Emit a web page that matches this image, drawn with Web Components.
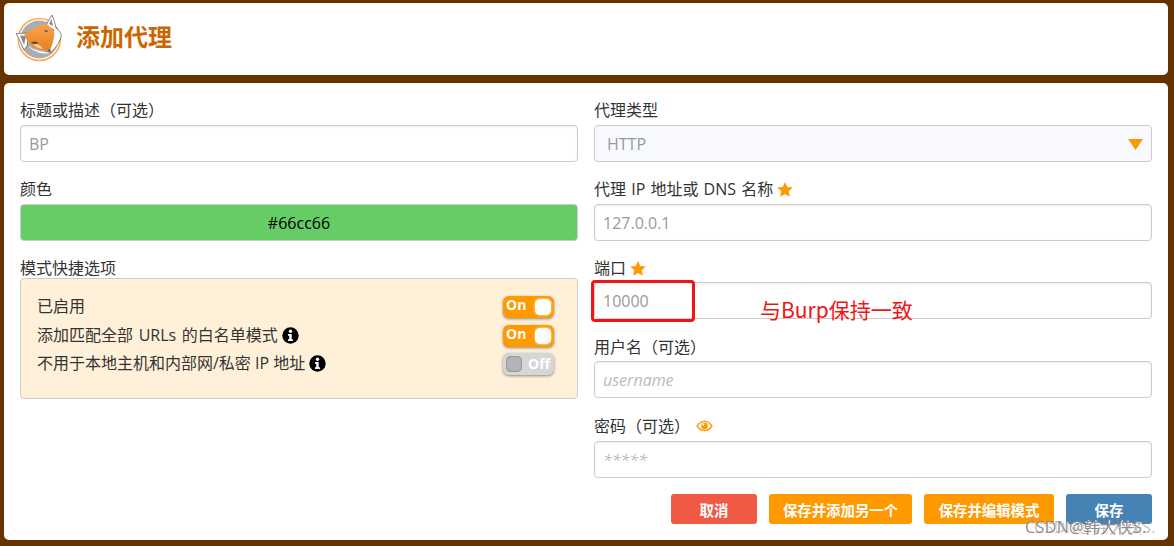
<!DOCTYPE html>
<html lang="zh">
<head>
<meta charset="utf-8">
<title>添加代理</title>
<style>
  html, body { margin: 0; height: 100%; }
  body {
    background: #663300;
    color: #333;
    font: 16px/21px "Open Sans", "Noto Sans CJK SC", sans-serif;
  }
  fp-page { height: 546px; }
</style>
</head>
<body>
<fp-page>
  <fp-header slot="header">添加代理</fp-header>

  <fp-field slot="left" label="标题或描述（可选）" value="BP"></fp-field>
  <fp-field slot="left" label="颜色" value="#66cc66" swatch></fp-field>
  <fp-pattern-box slot="left" label="模式快捷选项">
    <fp-toggle-row on>已启用</fp-toggle-row>
    <fp-toggle-row on info style="word-spacing: 1.5px">添加匹配全部 URLs 的白名单模式</fp-toggle-row>
    <fp-toggle-row info>不用于本地主机和内部网/私密 IP 地址</fp-toggle-row>
  </fp-pattern-box>

  <fp-select slot="right" label="代理类型" value="HTTP"></fp-select>
  <fp-field slot="right" label="代理 IP 地址或 DNS 名称" value="127.0.0.1" star></fp-field>
  <fp-field slot="right" label="端口" value="10000" star gap="4"></fp-field>
  <fp-field slot="right" label="用户名（可选）" placeholder="username" shift="2"></fp-field>
  <fp-field slot="right" label="密码（可选）" placeholder="*****" eye gap="6" shift="2"></fp-field>
  <fp-actions slot="right">
    <fp-button color="#f05a44" width="86">取消</fp-button>
    <fp-button color="#ff9900" width="143">保存并添加另一个</fp-button>
    <fp-button color="#ff9900" width="130">保存并编辑模式</fp-button>
    <fp-button color="#4682b4" width="86">保存</fp-button>
  </fp-actions>
</fp-page>

<script>
const ICONS = {
  star: `<svg width="16" height="15" viewBox="0 0 16 15"><path fill="#ff9900" d="M8 0l2.3 5 5.5.6-4.1 3.7 1.2 5.4L8 12l-4.9 2.7 1.2-5.4L.2 5.6 5.700 5z"/></svg>`,
  eye: `<svg width="17" height="12" viewBox="0 0 18 13"><path fill="none" stroke="#ff9900" stroke-width="1.500" d="M1 6.500C3.200 3.200 5.900 1.500 9 1.500s5.800 1.700 8 5c-2.200 3.300-4.900 5-8 5s-5.800-1.700-8-5z"/><circle cx="9" cy="6.500" r="3.600" fill="#ff9900"/><circle cx="7.700" cy="5" r="1.100" fill="#fff"/></svg>`,
  info: `<svg width="17" height="17" viewBox="0 0 17 17"><circle cx="8.500" cy="8.500" r="8.200" fill="#000"/><circle cx="8.500" cy="4.300" r="1.700" fill="#fff"/><path fill="#fff" d="M6 7h3.700v5.200h1.200V14H6v-1.800h1.200V8.800H6z"/></svg>`
};

class FpPage extends HTMLElement {
  constructor() {
    super();
    this.attachShadow({ mode: 'open' }).innerHTML = `
      <style>
        :host { display: block; box-sizing: border-box; padding: 3px 6px 6px 4px; position: relative; overflow: hidden; }
        .main {
          background: #fff;
          border-radius: 5px;
          margin-top: 8px;
          height: 457px;
          box-sizing: border-box;
          padding: 16px;
          display: grid;
          grid-template-columns: 558px 558px;
          column-gap: 16px;
          align-items: start;
        }
        .col { display: flex; flex-direction: column; }
        .note-box {
          position: absolute; left: 591px; top: 280px;
          width: 104px; height: 42px; box-sizing: border-box;
          border: 3px solid #f01414; border-radius: 4px;
        }
        .note {
          position: absolute; left: 760px; top: 295px;
          font: 21px/28px "Noto Sans CJK SC", sans-serif; color: #f01414;
        }
        .mark {
          position: absolute; left: 1025px; top: 517px;
          font: 16px/20px "Open Sans", "Noto Sans CJK SC", sans-serif;
          color: #8c8c8c; letter-spacing: .4px;
          text-shadow: 1px 1px 0 #fff, 9px 0 0 rgba(130,130,130,.55);
        }
      </style>
      <slot name="header"></slot>
      <div class="main">
        <div class="col"><slot name="left"></slot></div>
        <div class="col"><slot name="right"></slot></div>
      </div>
      <div class="note-box"></div>
      <div class="note">与Burp保持一致</div>
      <div class="mark">CSDN@韩大侠S.</div>`;
  }
}

class FpHeader extends HTMLElement {
  constructor() {
    super();
    this.attachShadow({ mode: 'open' }).innerHTML = `
      <style>
        :host {
          display: flex; align-items: center; gap: 11px;
          height: 72px; box-sizing: border-box; padding-left: 11px;
          background: #fff; border-radius: 5px;
        }
        svg { flex: none; }
        h1 { margin: -6px 0 0; font: bold 24px/32px "Noto Sans CJK SC", sans-serif; color: #cc6600; }
      </style>
      <svg width="50" height="50" viewBox="15 14 50 50">
        <defs>
          <linearGradient id="fur" x1="0" y1="0" x2="0" y2="1">
            <stop offset="0" stop-color="#f9a44e"/>
            <stop offset="1" stop-color="#e87f1e"/>
          </linearGradient>
        </defs>
        <circle cx="39.300" cy="39.500" r="21" fill="#fff" stroke="#ffa64d" stroke-width="1.500"/>
        <circle cx="39.300" cy="39.500" r="19" fill="#adadad"/>
        <path fill="#fff" stroke="#555" stroke-width=".7" d="M16 33.500L29 33l-2 13-3 4c-3-6-5-12-8-16.500z"/>
        <path fill="#8a8a8a" d="M20 35.500l6 .5-2 9z"/>
        <path fill="#fff" stroke="#555" stroke-width=".7" d="M46 25l6-10c2 4 3 9 4 13 5 4 6 7 5 9-2 7-7 13-11 16l-4-3 8-20z"/>
        <path fill="#8a8a8a" d="M49 24l2.500-5 1.500 7z"/>
        <path fill="url(#fur)" d="M24 35c7-5 14-10 23-11l7 7c1 7-2 15-4.500 20-5.500-1-13.500-2-17.500-5-3-3-6-7-8-11z"/>
        <path fill="#fff" d="M28 46c6 4 14 6 22 7-6 2-16-1-22-7z"/>
        <path fill="#fbd09c" d="M33 44c4-.5 8 1 10 5-4-.5-8-2-10-5z"/>
        <path fill="#444" d="M31 42.500c2-1 5-1 7.500.5-2.500 1.500-5.500 1-7.500-.5zM44 31c1.500-1 3-1 4.500 0-1.500 1-3 1-4.500 0zM47.500 51l2.500-2 1 3z"/>
      </svg>
      <h1><slot></slot></h1>`;
  }
}

class FpField extends HTMLElement {
  constructor() {
    super();
    const icon = this.hasAttribute('star') ? ICONS.star : this.hasAttribute('eye') ? ICONS.eye : '';
    const swatch = this.hasAttribute('swatch');
    const shift = this.getAttribute('shift') || 1;
    this.attachShadow({ mode: 'open' }).innerHTML = `
      <style>
        :host { display: block; margin-bottom: 16px; }
        label {
          display: flex; align-items: center; gap: ${this.hasAttribute('eye') ? 6 : 4}px;
          height: 21px; margin-bottom: ${this.getAttribute('gap') || 5}px;
          word-spacing: 1px;
        }
        label span { position: relative; top: ${shift}px; }
        label svg { position: relative; top: 1px; }
        input {
          display: block; width: 100%; height: 37px; box-sizing: border-box;
          padding: 0 8px; border: 1px solid #ccc; border-radius: 4px;
          font: 16px "Open Sans", "Noto Sans CJK SC", sans-serif; color: #999;
          background: #fff; outline: none;
          box-shadow: inset 0 1px 2px rgba(0,0,0,.08);
        }
        input::placeholder { color: #bbb; font-style: italic; opacity: 1; }
        input.swatch { background: #66cc66; color: #000; text-align: center; box-shadow: none; }
      </style>
      <label><span>${this.getAttribute('label')}</span>${icon}</label>
      <input class="${swatch ? 'swatch' : ''}" value="${this.getAttribute('value') || ''}"
        placeholder="${this.getAttribute('placeholder') || ''}">`;
  }
}

class FpSelect extends HTMLElement {
  constructor() {
    super();
    this.attachShadow({ mode: 'open' }).innerHTML = `
      <style>
        :host { display: block; margin-bottom: 16px; }
        label { display: block; height: 21px; margin-bottom: 5px; padding-top: 1px; box-sizing: border-box; line-height: 21px; }
        .box {
          height: 37px; box-sizing: border-box; padding: 1px 8px 0 12px;
          display: flex; align-items: center; justify-content: space-between;
          border: 1px solid #ccc; border-radius: 4px; background: #f8f9ff; color: #999;
        }
        svg { display: block; }
      </style>
      <label>${this.getAttribute('label')}</label>
      <div class="box"><span>${this.getAttribute('value')}</span>
        <svg width="15" height="11" viewBox="0 0 15 11"><path fill="#ff9900" d="M0 0h15L7.500 11z"/></svg>
      </div>`;
  }
}

class FpPatternBox extends HTMLElement {
  constructor() {
    super();
    this.attachShadow({ mode: 'open' }).innerHTML = `
      <style>
        :host { display: block; }
        .label { height: 21px; padding-top: 1px; box-sizing: border-box; }
        .box {
          height: 121px; box-sizing: border-box; padding: 14px 23px 0 16px;
          background: #fff1d9; border: 1px solid #ccc; border-radius: 4px;
        }
      </style>
      <div class="label">${this.getAttribute('label')}</div>
      <div class="box"><slot></slot></div>`;
  }
}

class FpToggleRow extends HTMLElement {
  constructor() {
    super();
    const on = this.hasAttribute('on');
    this.attachShadow({ mode: 'open' }).innerHTML = `
      <style>
        :host { display: flex; align-items: center; justify-content: space-between; height: 28.500px; }
        .text { display: flex; align-items: center; gap: 4px; margin-top: -1px; }
        svg { display: block; }
        .toggle {
          width: 51px; height: 22px; box-sizing: border-box; border-radius: 6px;
          display: flex; align-items: center; justify-content: space-between;
          padding: 0 3px 0 3px; flex-direction: ${on ? 'row' : 'row-reverse'};
          background: ${on ? '#ff9900' : '#d6d6d6'};
          box-shadow: 0 1px 3px rgba(0,0,0,.45);
          font: bold 14px/20px "Open Sans", sans-serif; color: #fff;
        }
        .word { ${on ? 'margin: -4px 0 0 0;' : 'margin: 0 1px 0 0;'} }
        .knob {
          width: 16px; height: 16px; border-radius: 5px;
          background: ${on ? '#fff' : '#b5b5b5'};
          box-shadow: ${on ? '0 0 3px rgba(255,255,255,.8)' : 'inset 0 0 2px rgba(0,0,0,.5)'};
        }
      </style>
      <div class="text"><slot></slot>${this.hasAttribute('info') ? ICONS.info : ''}</div>
      <div class="toggle"><span class="word">${on ? 'On' : 'Off'}</span><span class="knob"></span></div>`;
  }
}

class FpActions extends HTMLElement {
  constructor() {
    super();
    this.attachShadow({ mode: 'open' }).innerHTML = `
      <style>:host { display: flex; justify-content: flex-end; gap: 12px; }</style>
      <slot></slot>`;
  }
}

class FpButton extends HTMLElement {
  constructor() {
    super();
    this.attachShadow({ mode: 'open' }).innerHTML = `
      <style>
        :host {
          display: flex; align-items: center; justify-content: center;
          width: ${this.getAttribute('width')}px; height: 30px; border-radius: 3px;
          background: ${this.getAttribute('color')}; color: #fff;
          font: bold 14.400px "Noto Sans CJK SC", sans-serif;
        }
      </style>
      <slot></slot>`;
  }
}

customElements.define('fp-page', FpPage);
customElements.define('fp-header', FpHeader);
customElements.define('fp-field', FpField);
customElements.define('fp-select', FpSelect);
customElements.define('fp-pattern-box', FpPatternBox);
customElements.define('fp-toggle-row', FpToggleRow);
customElements.define('fp-actions', FpActions);
customElements.define('fp-button', FpButton);
</script>
</body>
</html>
